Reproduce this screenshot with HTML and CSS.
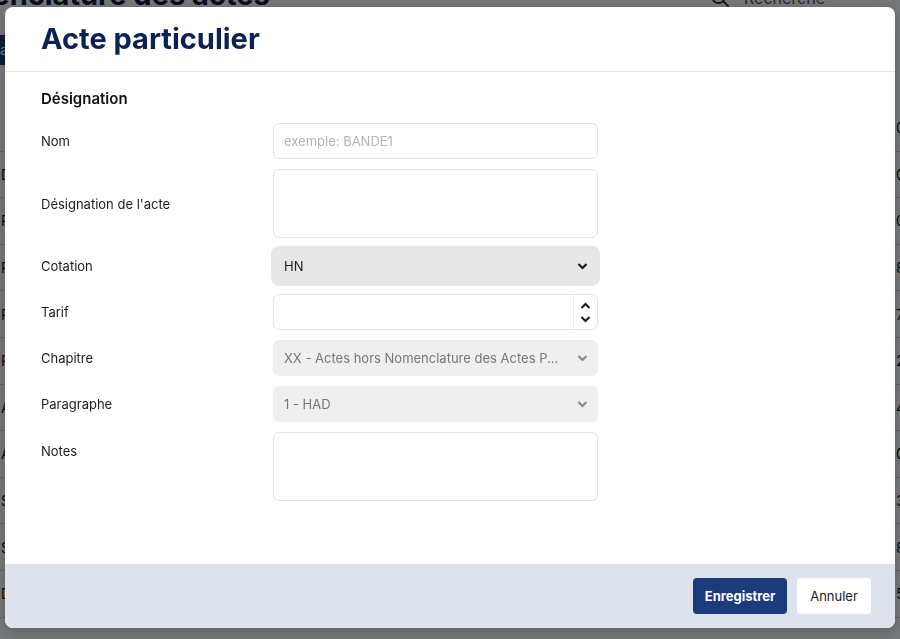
FILE: index.html
```html
<!DOCTYPE html>
<html lang="fr">

<head>
    <meta charset="UTF-8">
    <meta name="viewport" content="width=device-width, initial-scale=1.0">
    <title>Acte particulier</title>
    <link rel="stylesheet" href="styles.css">
</head>

<body>
    <div class="page">
        <div class="page-top">
            <h1 class="page-title">Nomenclature des actes</h1>
            <div class="search">
                <svg width="20" height="20" viewBox="0 0 20 20" fill="none" stroke="#2b2f3a" stroke-width="1.8">
                    <circle cx="8.5" cy="8.5" r="6.5" />
                    <path d="M13.5 13.5 L18 18" stroke-linecap="round" />
                </svg>
                <span>Recherche</span>
            </div>
        </div>
        <div class="page-tab">a</div>
        <div class="table">
            <div class="trow"><span class="c1"></span><span class="c2">0</span></div>
            <div class="trow"><span class="c1">D</span><span class="c2">0</span></div>
            <div class="trow"><span class="c1">P</span><span class="c2">0</span></div>
            <div class="trow"><span class="c1">P</span><span class="c2">8</span></div>
            <div class="trow"><span class="c1">R</span><span class="c2">7</span></div>
            <div class="trow"><span class="c1">R</span><span class="c2">2</span></div>
            <div class="trow"><span class="c1">A</span><span class="c2">4</span></div>
            <div class="trow"><span class="c1">A</span><span class="c2">0</span></div>
            <div class="trow"><span class="c1">S</span><span class="c2">3</span></div>
            <div class="trow"><span class="c1">S</span><span class="c2">8</span></div>
            <div class="trow"><span class="c1">D</span><span class="c2">5</span></div>
        </div>
    </div>

    <div class="overlay"></div>

    <div class="modal">
        <div class="modal-header">
            <h2>Acte particulier</h2>
        </div>
        <form class="modal-body">
            <h3>Désignation</h3>
            <div class="fields">
                <label for="nom">Nom</label>
                <input type="text" id="nom" class="field" placeholder="exemple: BANDE1">

                <label for="designation">Désignation de l'acte</label>
                <textarea id="designation" class="field area"></textarea>

                <label>Cotation</label>
                <div class="select focused">
                    <span>HN</span>
                    <svg width="11" height="10" viewBox="0 0 11 10"><path d="M1.5 3 L5.5 7 L9.5 3" fill="none" stroke="#1c1c1c" stroke-width="2.2" /></svg>
                </div>

                <label for="tarif">Tarif</label>
                <div class="number">
                    <input type="text" id="tarif">
                    <div class="spin">
                        <svg width="11" height="8" viewBox="0 0 11 8"><path d="M1.5 6 L5.5 2 L9.5 6" fill="none" stroke="#1c1c1c" stroke-width="2.1" /></svg>
                        <svg width="11" height="8" viewBox="0 0 11 8"><path d="M1.5 2 L5.5 6 L9.5 2" fill="none" stroke="#1c1c1c" stroke-width="2.1" /></svg>
                    </div>
                </div>

                <label>Chapitre</label>
                <div class="select disabled">
                    <span>XX - Actes hors Nomenclature des Actes P...</span>
                    <svg width="11" height="10" viewBox="0 0 11 10"><path d="M1.5 3 L5.5 7 L9.5 3" fill="none" stroke="#8a8a8a" stroke-width="2.2" /></svg>
                </div>

                <label>Paragraphe</label>
                <div class="select disabled">
                    <span>1 - HAD</span>
                    <svg width="11" height="10" viewBox="0 0 11 10"><path d="M1.5 3 L5.5 7 L9.5 3" fill="none" stroke="#8a8a8a" stroke-width="2.2" /></svg>
                </div>

                <label for="notes" class="top">Notes</label>
                <textarea id="notes" class="field area"></textarea>
            </div>
        </form>
        <div class="modal-footer">
            <button class="btn-primary" type="button">Enregistrer</button>
            <button class="btn-light" type="button">Annuler</button>
        </div>
    </div>
</body>

</html>
```

FILE: styles.css
```css
* {
    box-sizing: border-box;
}

body {
    margin: 0;
    height: 639px;
    overflow: hidden;
    font-family: Inter, "Noto Sans", sans-serif;
    color: #1c1c1c;
    background-color: #fbfcff;
}

/* page behind the dialog */

.page {
    width: 900px;
}

.page-top {
    display: flex;
    justify-content: space-between;
    align-items: flex-end;
    margin-top: -22px;
    height: 34px;
}

.page-title {
    margin: 0 0 0 -74px;
    font-size: 29px;
    line-height: 34px;
    font-weight: 700;
    color: #0f1d3d;
    white-space: nowrap;
}

.search {
    display: flex;
    align-items: center;
    gap: 14px;
    width: 190px;
    padding-bottom: 4px;
    font-size: 16px;
    color: #555;
}

.page-tab {
    margin-top: 23px;
    width: 40px;
    height: 30px;
    margin-left: -34px;
    padding: 6px 0 0 34px;
    background-color: #1b3b7d;
    color: #fff;
    font-size: 14px;
}

.table {
    margin-top: 40px;
}

.trow {
    display: flex;
    justify-content: space-between;
    align-items: center;
    height: 46.6px;
    border-bottom: 1px solid #d4d4d8;
    font-size: 14px;
    color: #111;
}

.c1 {
    padding-left: 1px;
}

.c2 {
    width: 4px;
    white-space: nowrap;
}

.overlay {
    position: fixed;
    inset: 0;
    background-color: rgba(0, 0, 2, 0.53);
}

/* dialog */

.modal {
    position: fixed;
    top: 7px;
    left: 5px;
    width: 890px;
    height: 621px;
    display: flex;
    flex-direction: column;
    background-color: #fff;
    border-radius: 8px;
    overflow: hidden;
    box-shadow: 0 4px 14px rgba(0, 0, 0, 0.2);
}

.modal-header {
    height: 65px;
    padding: 13px 36px 0;
    border-bottom: 1px solid #e6e6e6;
}

.modal-header h2 {
    margin: 0;
    font-size: 29px;
    line-height: 38px;
    font-weight: 700;
    color: #0c2254;
}

.modal-body {
    flex: 1;
    padding: 17px 36px 0;
}

.modal-body h3 {
    margin: 0 0 14px;
    font-size: 15px;
    line-height: 20px;
    font-weight: 600;
    color: #111;
}

.fields {
    display: grid;
    grid-template-columns: 232px 325px;
    row-gap: 10px;
    align-items: center;
}

.fields label {
    font-size: 13px;
    color: #1c1c1c;
}

.fields label.top {
    align-self: start;
    padding-top: 11px;
}

.field {
    height: 36px;
    padding: 0 10px;
    border: 1px solid #e2e2e2;
    border-radius: 6px;
    font-family: inherit;
    font-size: 13px;
    color: #222;
    outline: none;
}

.field::placeholder {
    color: #b4b4b4;
}

.area {
    height: 69px;
    resize: none;
}

.select {
    display: flex;
    justify-content: space-between;
    align-items: center;
    height: 36px;
    padding: 0 10px 0 11px;
    border-radius: 6px;
    font-size: 13px;
    white-space: nowrap;
}

.select.focused {
    background-color: #e7e7e7;
    color: #222;
    box-shadow: 0 0 0 2px #e3e6ee;
}

.select.disabled {
    background-color: #efefef;
    color: #777;
}

.number {
    display: flex;
    height: 36px;
    border: 1px solid #e2e2e2;
    border-radius: 6px;
}

.number input {
    flex: 1;
    border: none;
    outline: none;
    background: none;
}

.spin {
    width: 24px;
    border-left: 1px solid #ececec;
    display: flex;
    flex-direction: column;
    align-items: center;
    justify-content: center;
    gap: 5px;
}

.modal-footer {
    height: 64px;
    display: flex;
    justify-content: flex-end;
    align-items: center;
    gap: 10px;
    padding: 0 24px;
    background-color: #dee2ec;
}

.modal-footer button {
    height: 36px;
    border: none;
    border-radius: 4px;
    font-family: inherit;
    font-size: 13px;
}

.btn-primary {
    width: 94px;
    background-color: #1b3b7d;
    color: #fff;
    font-weight: 700;
}

.btn-light {
    width: 74px;
    background-color: #fff;
    color: #1c1c1c;
}
```
